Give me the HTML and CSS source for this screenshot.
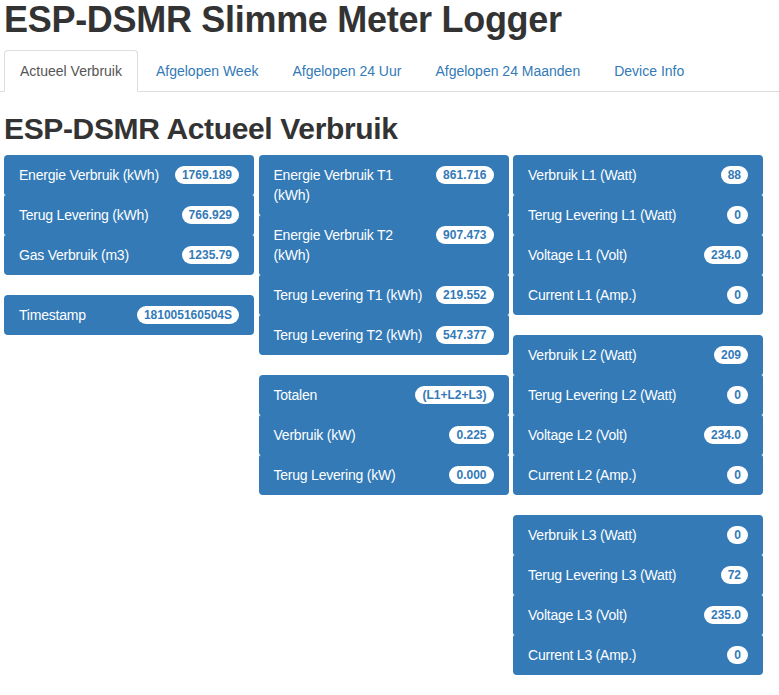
FILE: index.html
```html
<!DOCTYPE html>
<html lang="nl">
<head>
<meta charset="utf-8">
<title>ESP-DSMR Slimme Meter Logger</title>
<link rel="stylesheet" href="styles.css">
</head>
<body>
<div class="page">
  <h1 class="title">ESP-DSMR Slimme Meter Logger</h1>
  <ul class="tabs">
    <li class="tab active"><a>Actueel Verbruik</a></li>
    <li class="tab"><a>Afgelopen Week</a></li>
    <li class="tab"><a>Afgelopen 24 Uur</a></li>
    <li class="tab"><a>Afgelopen 24 Maanden</a></li>
    <li class="tab"><a>Device Info</a></li>
  </ul>
  <h2 class="subtitle">ESP-DSMR Actueel Verbruik</h2>
  <div class="grid">
    <div class="col">
      <ul class="group">
        <li class="item"><span class="badge">1769.189</span>Energie Verbruik (kWh)</li>
        <li class="item"><span class="badge">766.929</span>Terug Levering (kWh)</li>
        <li class="item"><span class="badge">1235.79</span>Gas Verbruik (m3)</li>
      </ul>
      <ul class="group">
        <li class="item"><span class="badge">181005160504S</span>Timestamp</li>
      </ul>
    </div>
    <div class="col">
      <ul class="group">
        <li class="item"><span class="badge">861.716</span>Energie Verbruik T1 (kWh)</li>
        <li class="item"><span class="badge">907.473</span>Energie Verbruik T2 (kWh)</li>
        <li class="item"><span class="badge">219.552</span>Terug Levering T1 (kWh)</li>
        <li class="item"><span class="badge">547.377</span>Terug Levering T2 (kWh)</li>
      </ul>
      <ul class="group">
        <li class="item"><span class="badge">(L1+L2+L3)</span>Totalen</li>
        <li class="item"><span class="badge">0.225</span>Verbruik (kW)</li>
        <li class="item"><span class="badge">0.000</span>Terug Levering (kW)</li>
      </ul>
    </div>
    <div class="col">
      <ul class="group">
        <li class="item"><span class="badge">88</span>Verbruik L1 (Watt)</li>
        <li class="item"><span class="badge">0</span>Terug Levering L1 (Watt)</li>
        <li class="item"><span class="badge">234.0</span>Voltage L1 (Volt)</li>
        <li class="item"><span class="badge">0</span>Current L1 (Amp.)</li>
      </ul>
      <ul class="group">
        <li class="item"><span class="badge">209</span>Verbruik L2 (Watt)</li>
        <li class="item"><span class="badge">0</span>Terug Levering L2 (Watt)</li>
        <li class="item"><span class="badge">234.0</span>Voltage L2 (Volt)</li>
        <li class="item"><span class="badge">0</span>Current L2 (Amp.)</li>
      </ul>
      <ul class="group">
        <li class="item"><span class="badge">0</span>Verbruik L3 (Watt)</li>
        <li class="item"><span class="badge">72</span>Terug Levering L3 (Watt)</li>
        <li class="item"><span class="badge">235.0</span>Voltage L3 (Volt)</li>
        <li class="item"><span class="badge">0</span>Current L3 (Amp.)</li>
      </ul>
    </div>
  </div>
</div>
</body>
</html>
```
FILE: styles.css
```css
* { box-sizing: border-box; }
html, body { margin: 0; padding: 0; background: #fff; }
body {
  font-family: "Liberation Sans", Arial, Helvetica, sans-serif;
  font-size: 14px;
  line-height: 20px;
  color: #333;
}
.title {
  margin: 0 0 10px 0;
  padding-left: 4px;
  font-size: 36px;
  line-height: 39.6px;
  font-weight: bold;
  letter-spacing: -0.3px;
  color: #333;
}
.tabs {
  list-style: none;
  margin: 0;
  padding: 0 0 0 4px;
  display: flex;
  border-bottom: 1px solid #ddd;
}
.tab { margin-bottom: -1px; }
.tab a {
  display: block;
  padding: 10px 15px;
  margin-right: 2px;
  border: 1px solid transparent;
  border-radius: 4px 4px 0 0;
  color: #337ab7;
  line-height: 20px;
}
.tab.active a {
  color: #555;
  background: #fff;
  border-color: #ddd #ddd transparent #ddd;
}
.subtitle {
  margin: 20px 0 10px 0;
  padding-left: 4px;
  font-size: 30px;
  line-height: 33px;
  font-weight: bold;
  letter-spacing: -0.35px;
  color: #333;
}
.grid {
  display: grid;
  grid-template-columns: 250px 250px 250px;
  column-gap: 4.5px;
  padding-left: 4px;
  align-items: start;
}
.group {
  list-style: none;
  margin: 0 0 20px 0;
  padding: 0;
}
.item {
  background: #337ab7;
  color: #fff;
  padding: 10px 15px;
  line-height: 20px;
  letter-spacing: -0.22px;
  border-radius: 2px;
}
.item:first-child { border-top-left-radius: 4px; border-top-right-radius: 4px; }
.item:last-child { border-bottom-left-radius: 4px; border-bottom-right-radius: 4px; }
.badge {
  float: right;
  margin-left: 10px;
  min-width: 10px;
  padding: 3px 7px;
  font-size: 12px;
  font-weight: bold;
  line-height: 12px;
  letter-spacing: 0;
  color: #337ab7;
  background: #fff;
  border-radius: 10px;
  text-align: center;
  white-space: nowrap;
  margin-top: 1px;
}
```
